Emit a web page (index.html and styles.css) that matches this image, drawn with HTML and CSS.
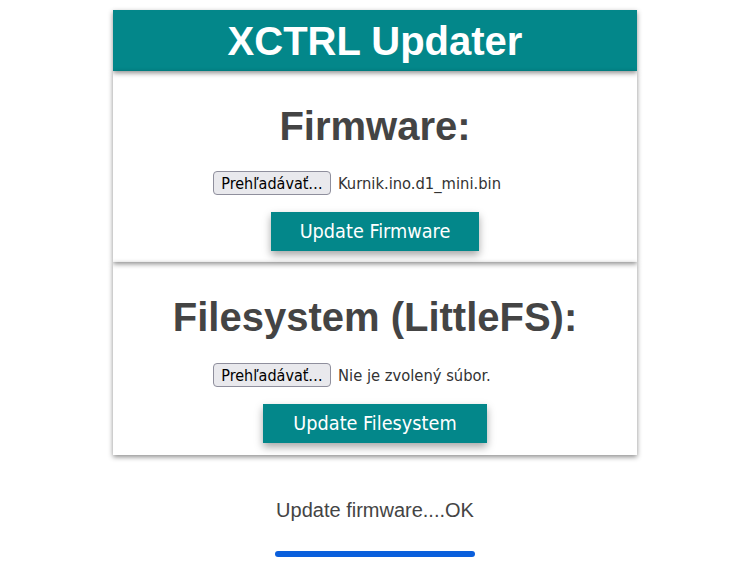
FILE: index.html
```html
<!DOCTYPE html>
<html lang="sk">
<head>
<meta charset="utf-8">
<title>XCTRL Updater</title>
<link rel="stylesheet" href="styles.css">
</head>
<body>
<main class="wrap">
  <header class="head">XCTRL Updater</header>
  <section class="card card-fw">
    <h2 class="title">Firmware:</h2>
    <div class="file-row">
      <div class="file">
        <button class="browse" type="button">Prehľadávať…</button>
        <span class="file-name">Kurnik.ino.d1_mini.bin</span>
      </div>
    </div>
    <button class="update" type="button">Update Firmware</button>
  </section>
  <section class="card card-fs">
    <h2 class="title">Filesystem (LittleFS):</h2>
    <div class="file-row">
      <div class="file">
        <button class="browse" type="button">Prehľadávať…</button>
        <span class="file-name">Nie je zvolený súbor.</span>
      </div>
    </div>
    <button class="update" type="button">Update Filesystem</button>
  </section>
</main>
<p class="status">Update firmware....OK</p>
<div class="progress"><div class="progress-fill"></div></div>
</body>
</html>
```

FILE: styles.css
```css
html, body {
  margin: 0;
  padding: 0;
  background: #fff;
}
body {
  font-family: "Liberation Sans", Arial, sans-serif;
  color: #444;
}
.wrap {
  width: 524px;
  margin: 10px auto 0;
  display: flex;
  flex-direction: column;
}
.head {
  height: 61px;
  line-height: 63px;
  background: #03878a;
  color: #fff;
  font-weight: bold;
  font-size: 40px;
  text-align: center;
  box-shadow: 0 2px 5px rgba(0, 0, 0, 0.45);
}
.card {
  display: flex;
  flex-direction: column;
  align-items: center;
  box-shadow: 0 2px 5px rgba(0, 0, 0, 0.45);
}
.card-fw {
  height: 191px;
}
.card-fs {
  height: 193px;
}
.title {
  margin: 32px 0 0;
  font-size: 40px;
  line-height: 46px;
  font-weight: bold;
  color: #444;
}
.card-fw .title { margin-bottom: 22px; }
.card-fs .title { margin-bottom: 23px; }
.file-row {
  height: 24px;
  display: flex;
  justify-content: center;
  width: 100%;
}
.file {
  width: 324px;
  display: flex;
  align-items: center;
  gap: 7px;
  font-family: "DejaVu Sans Condensed", "DejaVu Sans", sans-serif;
  font-stretch: condensed;
}
.browse {
  box-sizing: border-box;
  width: 118px;
  height: 24px;
  padding: 0;
  border: 1px solid #8f8f9d;
  border-radius: 4px;
  background: #e9e9ed;
  color: #000;
  font-family: inherit;
  font-size: 16px;
}
.file-name {
  font-size: 16.4px;
  color: #333;
  white-space: nowrap;
}
.update {
  margin-top: 17px;
  height: 39px;
  padding: 0 29px;
  border: 0;
  background: #03878a;
  color: #fff;
  font-family: "DejaVu Sans Condensed", "DejaVu Sans", sans-serif;
  font-stretch: condensed;
  font-size: 19.7px;
  box-shadow: 0 4px 8px rgba(0, 0, 0, 0.35);
}
.card-fs .update { padding: 0 30px; }
.status {
  margin: 44px 0 0;
  text-align: center;
  font-size: 20px;
  line-height: 23px;
  color: #444;
}
.progress {
  width: 200px;
  height: 6px;
  margin: 29px auto 0;
  border-radius: 3px;
  background: #e0e0e6;
  overflow: hidden;
}
.progress-fill {
  height: 100%;
  width: 100%;
  background: #0a5fdc;
}
```
